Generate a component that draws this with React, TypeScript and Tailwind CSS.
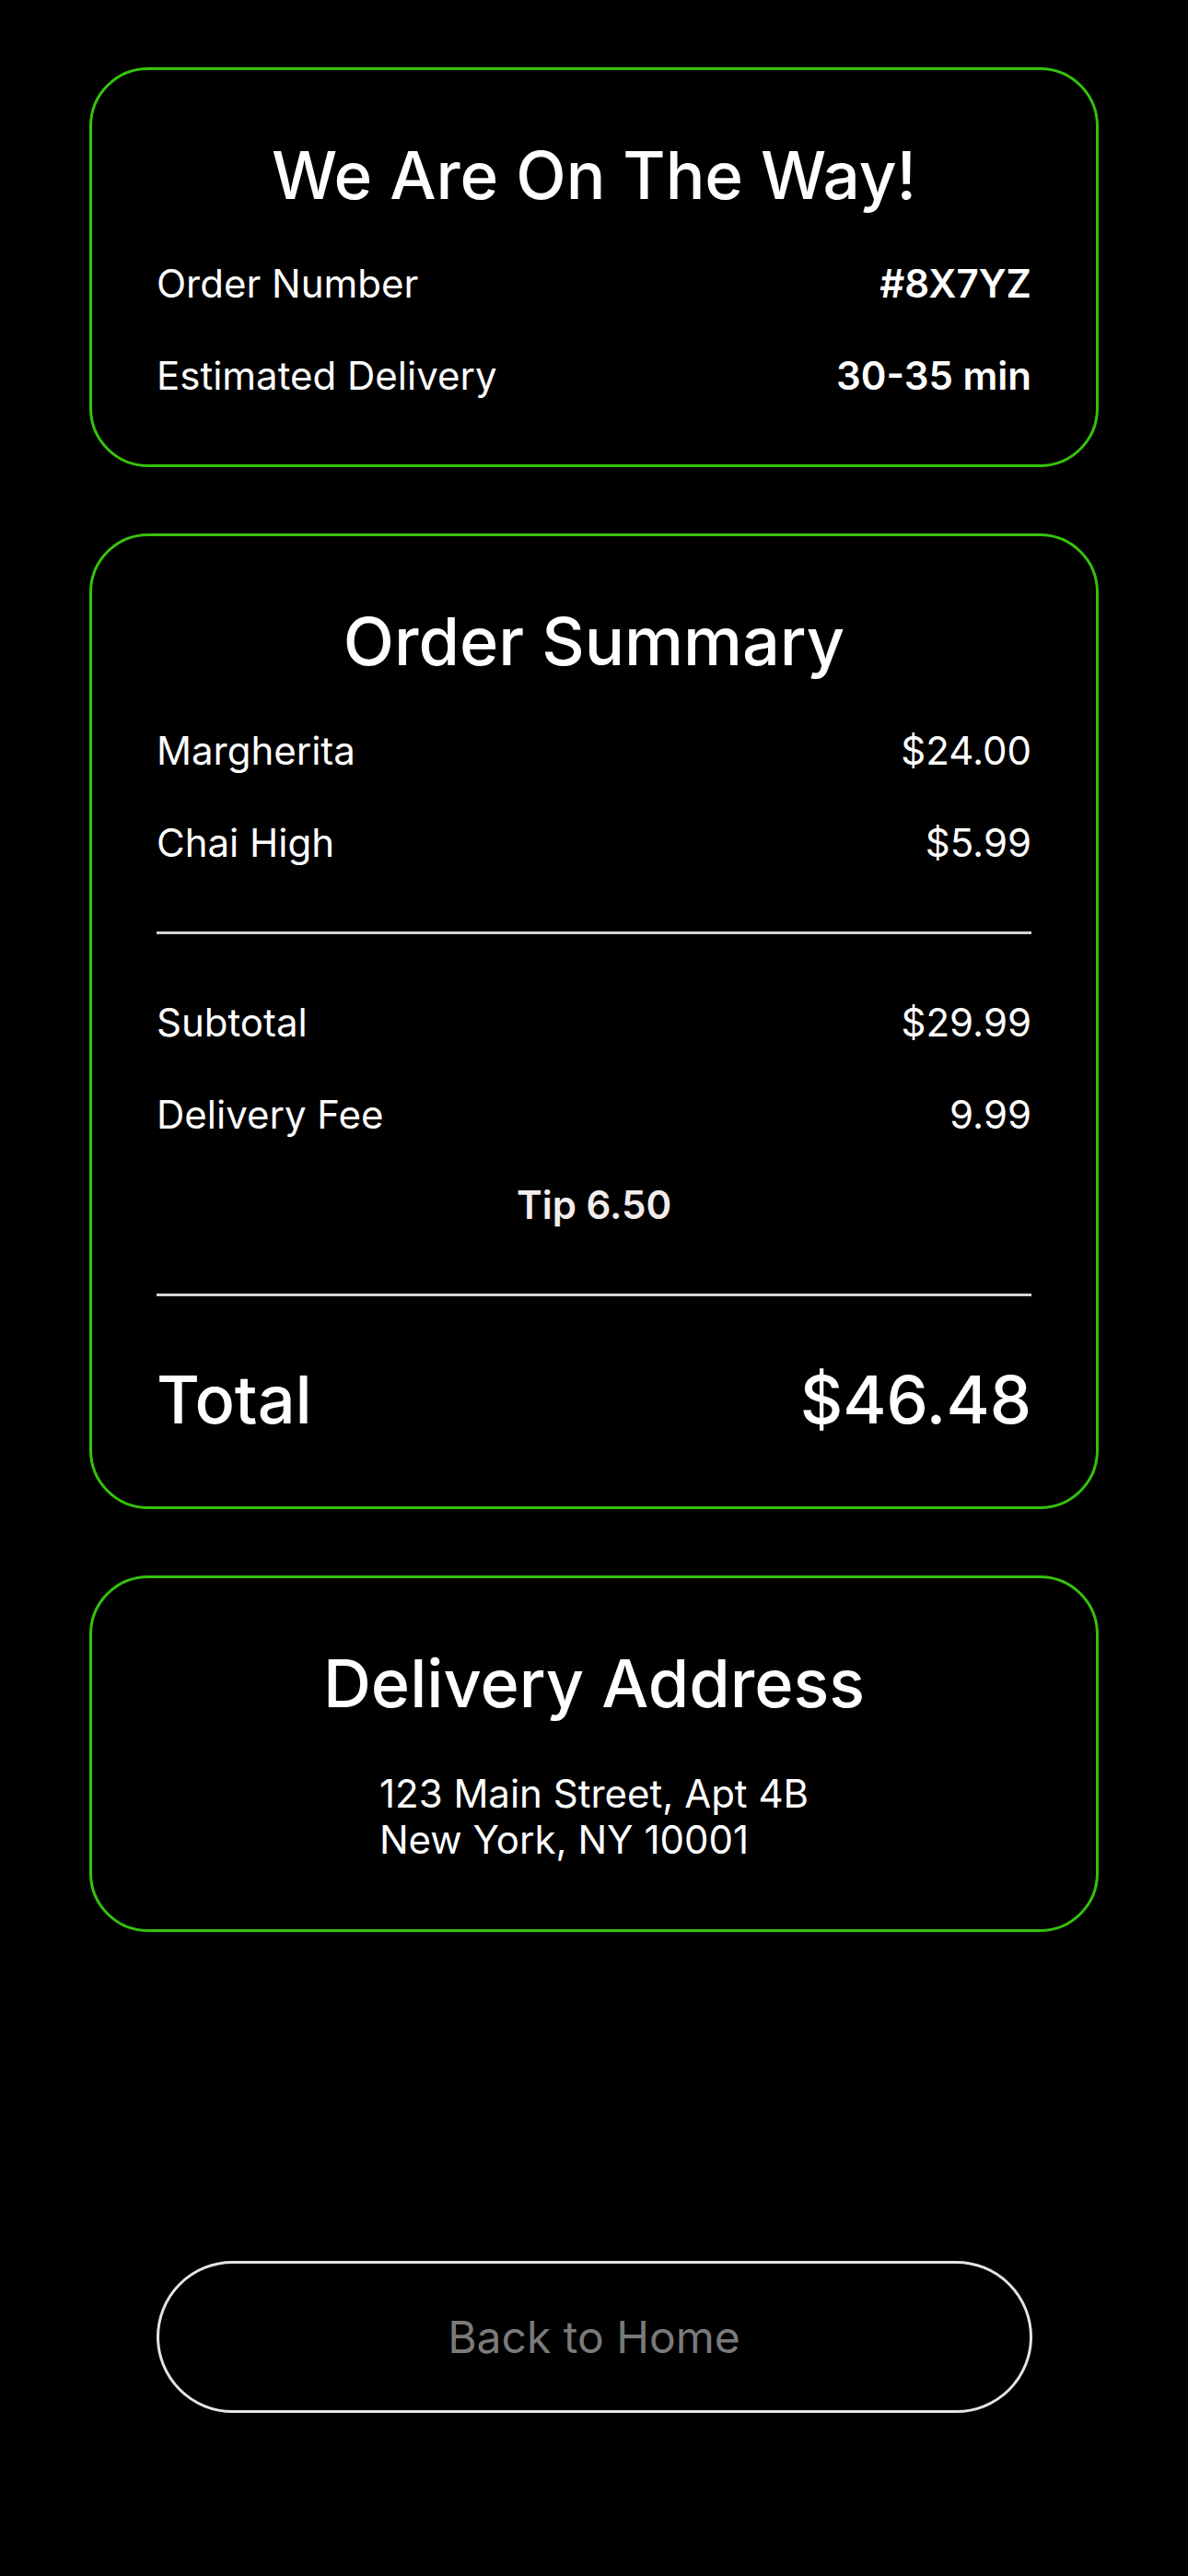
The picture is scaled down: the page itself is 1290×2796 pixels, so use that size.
import React from "react";

const font = { fontFamily: "Inter, 'Noto Sans', sans-serif" };

function Row({ label, value, strong }: { label: string; value: string; strong?: boolean }) {
  return (
    <div className="flex items-center justify-between text-[42px] leading-[60px]">
      <span>{label}</span>
      <span className={strong ? "font-semibold" : ""}>{value}</span>
    </div>
  );
}

function Card({ children, pb }: { children: React.ReactNode; pb: string }) {
  return (
    <section className={`rounded-[64px] border-[3px] border-[#35c20c] px-[70px] pt-[60px] ${pb}`}>{children}</section>
  );
}

export default function App() {
  return (
    <div className="min-h-screen bg-black text-white" style={font}>
      <div className="flex flex-col px-[97px] pt-[73px]">
        <Card pb="pb-[66px]">
          <h1 className="text-center text-[71px] font-medium leading-[108px]">We Are On The Way!</h1>
          <div className="mt-[34px] flex flex-col gap-10">
            <Row label="Order Number" value="#8X7YZ" strong />
            <Row label="Estimated Delivery" value="30-35 min" strong />
          </div>
        </Card>

        <div className="mt-[72px]">
          <Card pb="pb-[62px]">
            <h2 className="text-center text-[72px] font-medium leading-[108px]">Order Summary</h2>
            <div className="mt-[35px] flex flex-col gap-10">
              <Row label="Margherita" value="$24.00" />
              <Row label="Chai High" value="$5.99" />
            </div>
            <hr className="my-[66px] border-t-[3px] border-[#d4d4d4]" />
            <div className="flex flex-col gap-10">
              <Row label="Subtotal" value="$29.99" />
              <Row label="Delivery Fee" value="9.99" />
              <p className="-mt-[2px] text-center text-[42px] font-semibold leading-[60px] text-[#f3ecec]">Tip 6.50</p>
            </div>
            <hr className="mb-[58px] mt-[66px] border-t-[3px] border-[#d4d4d4]" />
            <div className="flex items-center justify-between text-[72px] font-medium leading-[108px]">
              <span>Total</span>
              <span>$46.48</span>
            </div>
          </Card>
        </div>

        <div className="mt-[72px]">
          <Card pb="pb-[72px]">
            <h2 className="text-center text-[72px] font-medium leading-[108px]">Delivery Address</h2>
            <div className="mt-[41px] flex justify-center">
              <p className="text-left text-[42px] leading-[50px]">
                123 Main Street, Apt 4B
                <br />
                New York, NY 10001
              </p>
            </div>
          </Card>
        </div>

        <div className="mt-[357px] flex justify-center">
          <button className="h-[165px] w-[951px] rounded-full border-[3px] border-[#e4e4e4] bg-black text-[48px] text-[#7a7a7a]">
            Back to Home
          </button>
        </div>
      </div>
    </div>
  );
}
